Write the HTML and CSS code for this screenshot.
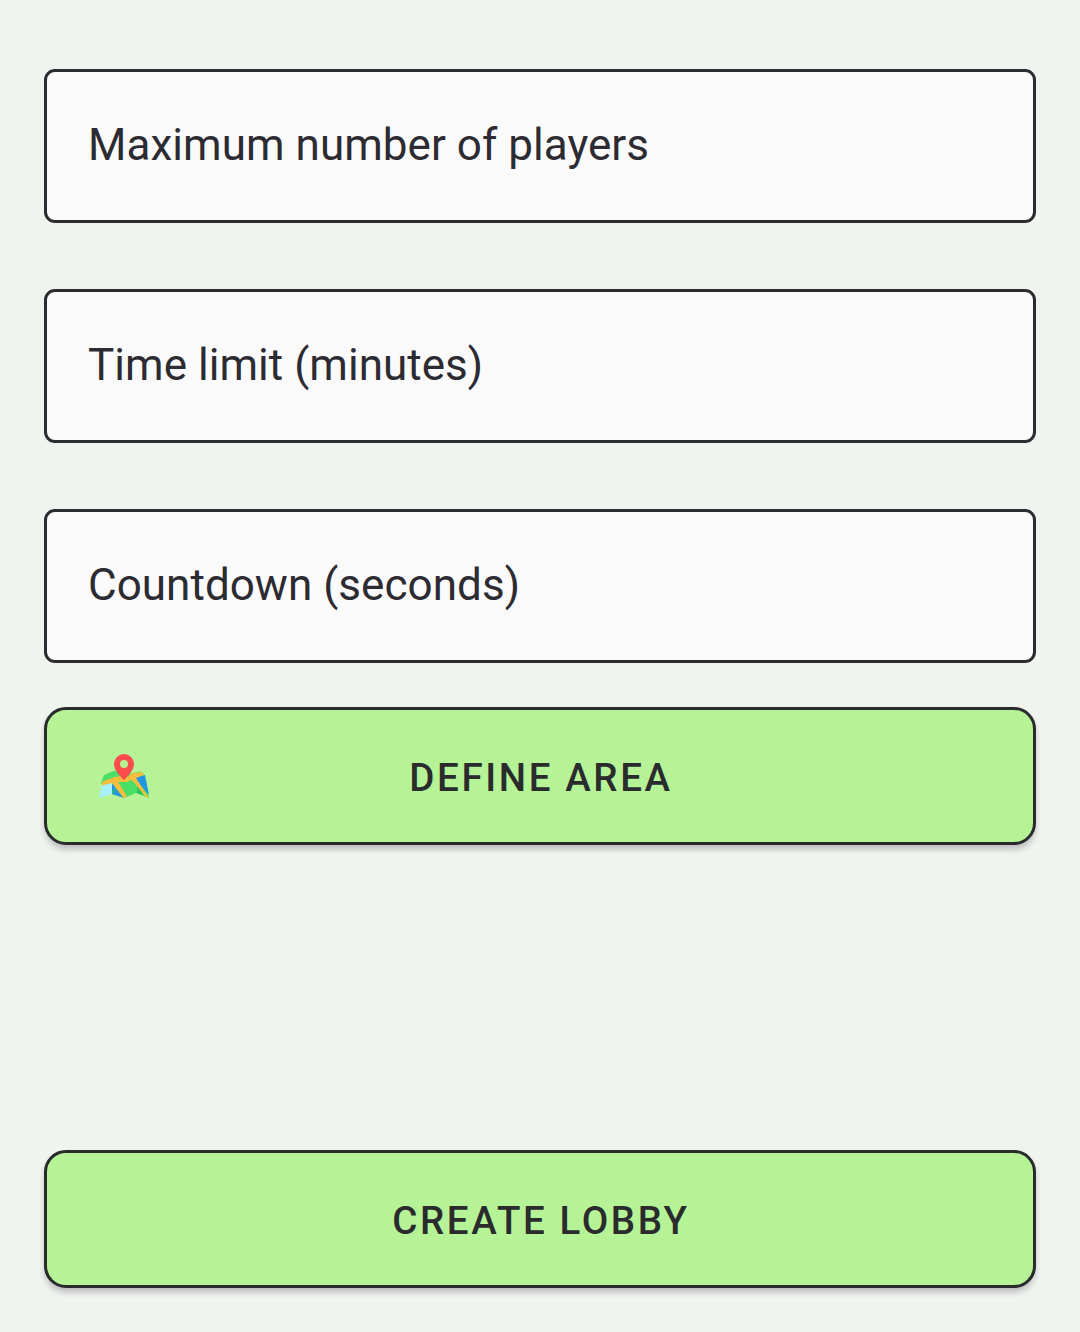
FILE: index.html
```html
<!DOCTYPE html>
<html lang="en">
<head>
<meta charset="utf-8">
<title>Create lobby</title>
<link rel="stylesheet" href="styles.css">
</head>
<body>
<form class="lobby-form">
  <div class="fields">
    <div class="field">Maximum number of players</div>
    <div class="field">Time limit (minutes)</div>
    <div class="field">Countdown (seconds)</div>
  </div>
  <button class="button define-area" type="button">
    <svg class="map-icon" viewBox="0 0 50 46" aria-hidden="true">
      <path fill="#4ade66" d="M5 22 L16 17.5 L25 22 L41 18.5 L45 21 L50 45 L37 40 L25 45 L13 41 L2 30Z"/>
      <path fill="#a7f0fc" d="M3 32 L13 29 L13 41 L0 45Z"/>
      <path fill="#2196e3" d="M13 30 L25 45 L13 41Z M35 25 L46 22 L50 42Z"/>
      <path fill="#30c060" d="M13 41 L13 38 L18 36Z M38 29 L38 40 L44 42.5Z"/>
      <path fill="#f9bd3c" d="M3.5 28.5 L16 24 L28 43.5 L24.5 45 L13 30 L2.5 32.5Z M14 24.5 L22 23 L25 26 L34 20 L43 19 L45 22 L37 25 L50 45 L47 44 L33 27 L27 29 L16 29Z"/>
      <path fill="#ff4b4b" d="M25 27.5 C22 23 15 18 15 11 A10 10 0 0 1 35 11 C35 18 28 23 25 27.5Z"/>
      <circle cx="25" cy="11" r="4" fill="#b5f396"/>
    </svg>
    <span>DEFINE AREA</span>
  </button>
  <button class="button create-lobby" type="button"><span>CREATE LOBBY</span></button>
</form>
</body>
</html>
```
FILE: styles.css
```css
* { box-sizing: border-box; }

body {
  margin: 0;
  background: #eff4ee;
  font-family: Roboto, sans-serif;
}

.lobby-form {
  display: flex;
  flex-direction: column;
  height: 1332px;
  padding: 69px 44px 44px;
}

.fields {
  display: flex;
  flex-direction: column;
  gap: 66px;
}

.field {
  display: flex;
  align-items: center;
  height: 154px;
  padding: 0 41px 2px;
  border: 3px solid #2d2b32;
  border-radius: 11px;
  background: #fafafa;
  color: #2d2b32;
  font-size: 44px;
  letter-spacing: .04px;
  white-space: nowrap;
}

.button {
  display: grid;
  grid-template-columns: 50px 1fr 50px;
  align-items: center;
  height: 138px;
  padding: 0 52px;
  border: 3px solid #2a2b2d;
  border-radius: 22px;
  background: #b6f396;
  box-shadow: 0 5px 6px -1px rgba(35, 10, 45, .25);
  color: #2a2b2d;
  font-family: inherit;
  font-size: 38.5px;
  font-weight: 500;
  letter-spacing: 2.6px;
  white-space: nowrap;
}

.button span {
  grid-column: 2;
  grid-row: 1;
  padding: 2px 0 0 2px;
  text-align: center;
}

.define-area { margin-top: 44px; }

.create-lobby { margin-top: auto; }

.map-icon {
  display: block;
  grid-column: 1;
  grid-row: 1;
  width: 50px;
  height: 46px;
}
```
